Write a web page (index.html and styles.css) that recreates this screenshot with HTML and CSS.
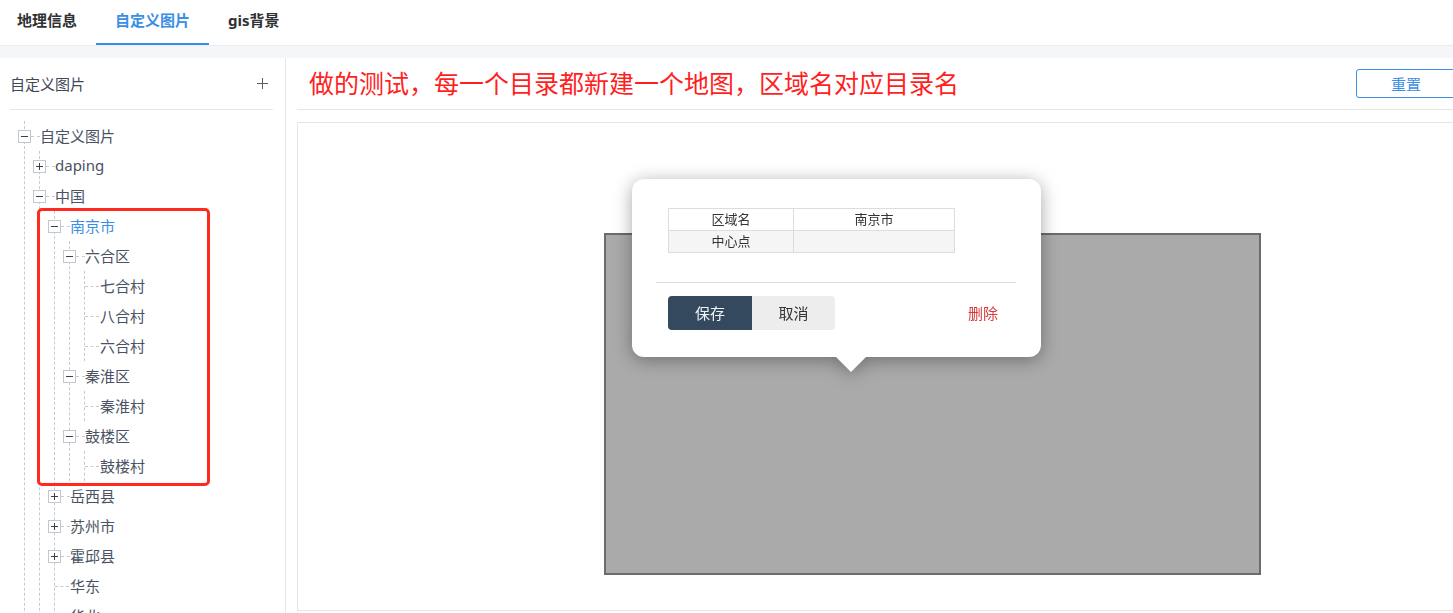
FILE: index.html
```html
<!DOCTYPE html>
<html lang="zh-CN">
<head>
<meta charset="utf-8">
<title>自定义图片</title>
<link rel="stylesheet" href="styles.css">
</head>
<body>
<div class="page">
  <nav class="tabs">
    <div class="tab">地理信息</div>
    <div class="tab active">自定义图片</div>
    <div class="tab">gis背景</div>
  </nav>
  <div class="band"></div>
  <div class="main">
    <aside class="side">
      <div class="side-head">
        <span class="side-title">自定义图片</span>
        <span class="add"></span>
      </div>
      <ul class="tree">
        <li>
          <div class="node"><span class="sw minus"></span><span class="link"></span><span class="label">自定义图片</span></div>
          <ul>
            <li><div class="node"><span class="sw plus"></span><span class="link"></span><span class="label">daping</span></div></li>
            <li>
              <div class="node"><span class="sw minus"></span><span class="link"></span><span class="label">中国</span></div>
              <ul>
                <li>
                  <div class="node"><span class="sw minus"></span><span class="link"></span><span class="label selected">南京市</span></div>
                  <ul>
                    <li>
                      <div class="node"><span class="sw minus"></span><span class="link"></span><span class="label">六合区</span></div>
                      <ul>
                        <li><div class="node leaf"><span class="leaf-link"></span><span class="label">七合村</span></div></li>
                        <li><div class="node leaf"><span class="leaf-link"></span><span class="label">八合村</span></div></li>
                        <li><div class="node leaf"><span class="leaf-link"></span><span class="label">六合村</span></div></li>
                      </ul>
                    </li>
                    <li>
                      <div class="node"><span class="sw minus"></span><span class="link"></span><span class="label">秦淮区</span></div>
                      <ul>
                        <li><div class="node leaf"><span class="leaf-link"></span><span class="label">秦淮村</span></div></li>
                      </ul>
                    </li>
                    <li>
                      <div class="node"><span class="sw minus"></span><span class="link"></span><span class="label">鼓楼区</span></div>
                      <ul>
                        <li><div class="node leaf"><span class="leaf-link"></span><span class="label">鼓楼村</span></div></li>
                      </ul>
                    </li>
                  </ul>
                </li>
                <li><div class="node"><span class="sw plus"></span><span class="link"></span><span class="label">岳西县</span></div></li>
                <li><div class="node"><span class="sw plus"></span><span class="link"></span><span class="label">苏州市</span></div></li>
                <li><div class="node"><span class="sw plus"></span><span class="link"></span><span class="label">霍邱县</span></div></li>
                <li><div class="node leaf"><span class="leaf-link"></span><span class="label">华东</span></div></li>
                <li><div class="node leaf"><span class="leaf-link"></span><span class="label">华北</span></div></li>
                <li><div class="node leaf"><span class="leaf-link"></span><span class="label">华南</span></div></li>
              </ul>
            </li>
          </ul>
        </li>
      </ul>
      <div class="mark"></div>
    </aside>
    <section class="content">
      <div class="content-head">
        <h1 class="note">做的测试，每一个目录都新建一个地图，区域名对应目录名</h1>
        <button class="reset">重置</button>
      </div>
      <div class="map">
        <div class="map-rect"></div>
        <div class="popup">
          <div class="popup-body">
            <table class="info">
              <tr><td class="k">区域名</td><td>南京市</td></tr>
              <tr class="alt"><td class="k">中心点</td><td></td></tr>
            </table>
          </div>
          <div class="popup-foot">
            <div class="btn-group">
              <button class="btn save">保存</button>
              <button class="btn cancel">取消</button>
            </div>
            <a class="del">删除</a>
          </div>
          <span class="arrow"></span>
        </div>
      </div>
    </section>
  </div>
</div>
</body>
</html>
```
FILE: styles.css
```css
html, body {
  margin: 0;
  padding: 0;
  overflow: hidden;
  background: #fff;
}
body {
  font-family: "Noto Sans", "Noto Sans CJK SC", sans-serif;
  color: #4a5364;
}
.page {
  width: 1466px;
  height: 613px;
  display: flex;
  flex-direction: column;
}

/* tabs */
.tabs {
  display: flex;
  height: 45px;
  padding-left: 17px;
  background: #fff;
}
.tab {
  box-sizing: border-box;
  height: 45px;
  padding: 0 19px;
  line-height: 41px;
  font-size: 15px;
  font-weight: bold;
  color: #303133;
  border-bottom: 2px solid transparent;
}
.tab:first-child { padding-left: 0; }
.tab.active {
  color: #3a8ee6;
  border-bottom-color: #3a8ee6;
}
.band {
  height: 12px;
  border-top: 1px solid #e9ebef;
  background: #f5f6f8;
}

.main {
  flex: 1;
  display: flex;
  min-height: 0;
}

/* side */
.side {
  position: relative;
  width: 285px;
  border-right: 1px solid #e6e6e6;
  flex: none;
  overflow: hidden;
}
.side-head {
  height: 51px;
  margin: 0 12px 0 10px;
  border-bottom: 1px solid #e6e6e6;
  display: flex;
  align-items: center;
  justify-content: space-between;
}
.side-title {
  font-size: 15px;
  color: #3f4858;
  padding-bottom: 1px;
}
.add {
  position: relative;
  width: 11px;
  height: 11px;
  margin-right: 5px;
}
.add::before, .add::after {
  content: "";
  position: absolute;
  background: #555c68;
}
.add::before { left: 0; right: 0; top: 5px; height: 1px; }
.add::after { top: 0; bottom: 0; left: 5px; width: 1px; }

.tree, .tree ul {
  list-style: none;
  margin: 0;
  padding: 0;
  border-left: 1px dashed #c6cbd3;
}
.tree {
  margin: 11px 0 0 24px;
}
.tree ul {
  margin-left: 14px;
}
.node {
  height: 30px;
  display: flex;
  align-items: center;
  margin-left: -7px;
}
.node.leaf {
  margin-left: 0;
}
.sw {
  position: relative;
  box-sizing: border-box;
  width: 13px;
  height: 13px;
  border: 1px solid #c3c8d0;
  background: #fff;
  flex: none;
}
.sw::before {
  content: "";
  position: absolute;
  left: 2px;
  right: 2px;
  top: 5px;
  height: 1px;
  background: #3b3f47;
}
.sw.plus::after {
  content: "";
  position: absolute;
  top: 2px;
  bottom: 2px;
  left: 5px;
  width: 1px;
  background: #3b3f47;
}
.link {
  width: 9px;
  border-top: 1px dashed #c6cbd3;
  flex: none;
}
.leaf-link {
  width: 14px;
  margin-right: 1px;
  border-top: 1px dashed #c6cbd3;
  flex: none;
}
.label {
  font-size: 15px;
  color: #4a5364;
  white-space: nowrap;
  padding-bottom: 2px;
}
.label.selected {
  color: #3a8ee6;
}
.mark {
  position: absolute;
  left: 37px;
  top: 150px;
  width: 173px;
  height: 278px;
  box-sizing: border-box;
  border: 3px solid #ff2a1f;
  border-radius: 5px;
}

/* content */
.content {
  flex: 1;
  padding: 0 10px 0 11px;
  display: flex;
  flex-direction: column;
}
.content-head {
  height: 51px;
  border-bottom: 1px solid #e6e6e6;
  display: flex;
  align-items: center;
  justify-content: space-between;
  padding-left: 12px;
}
.note {
  margin: 0;
  font-size: 25px;
  font-weight: normal;
  color: #ff1f1f;
  font-family: "Noto Sans CJK SC", sans-serif;
  line-height: 1;
  padding-bottom: 3px;
}
.reset {
  width: 100px;
  height: 29px;
  border: 1px solid #3a8ee6;
  border-radius: 3px;
  background: #fff;
  color: #3a8ee6;
  font-size: 15px;
  font-family: "Noto Sans CJK SC", sans-serif;
  padding: 0;
}
.map {
  position: relative;
  margin-top: 12px;
  height: 489px;
  box-sizing: border-box;
  border: 1px solid #e6e6e6;
}
.map-rect {
  position: absolute;
  left: 306px;
  top: 110px;
  width: 657px;
  height: 342px;
  box-sizing: border-box;
  background: #aaaaaa;
  border: 2px solid #6c6c6c;
}
.popup {
  position: absolute;
  left: 334px;
  top: 56px;
  width: 409px;
  height: 178px;
  box-sizing: border-box;
  background: #fff;
  border-radius: 12px;
  padding: 0 25px 0 24px;
  filter: drop-shadow(0 3px 9px rgba(0, 0, 0, 0.35));
  font-family: "Noto Sans CJK SC", sans-serif;
}
.popup-body {
  padding: 29px 12px 0;
  height: 74px;
  border-bottom: 1px solid #dcdcdc;
}
.info {
  border-collapse: collapse;
  width: 287px;
  font-size: 13px;
  color: #333;
}
.info td {
  border: 1px solid #dddddd;
  height: 20px;
  padding: 0 0 1px;
  text-align: center;
  line-height: 18px;
}
.info td.k { width: 124px; }
.info tr.alt td { background: #f5f5f5; }
.popup-foot {
  padding: 13px 12px 0;
  display: flex;
  align-items: center;
  justify-content: space-between;
}
.btn-group {
  display: flex;
}
.btn {
  height: 34px;
  border: none;
  padding: 0 0 2px;
  font-size: 15px;
  font-family: "Noto Sans CJK SC", sans-serif;
}
.btn.save {
  width: 84px;
  background: #34495e;
  color: #f1f4f7;
  border-radius: 4px 0 0 4px;
}
.btn.cancel {
  width: 83px;
  background: #ededed;
  color: #333;
  border-radius: 0 4px 4px 0;
}
.del {
  font-size: 15px;
  color: #d8383a;
  padding: 0 6px 2px;
}
.arrow {
  position: absolute;
  left: 203px;
  top: 177px;
  width: 0;
  height: 0;
  border-left: 16px solid transparent;
  border-right: 16px solid transparent;
  border-top: 16px solid #fff;
}
```
